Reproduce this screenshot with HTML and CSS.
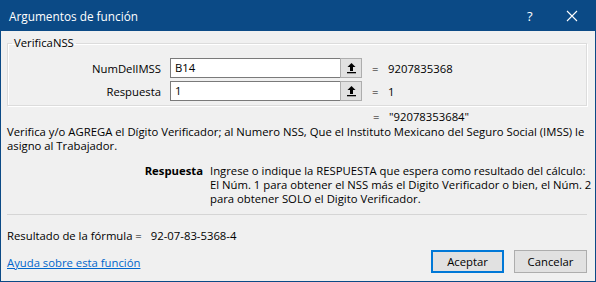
FILE: index.html
```html
<!DOCTYPE html>
<html lang="es">
<head>
    <meta charset="UTF-8">
    <meta name="viewport" content="width=device-width, initial-scale=1.0">
    <title>Argumentos de función</title>
    <link rel="stylesheet" href="styles.css">
</head>
<body>
    <div class="dialog">
        <header class="titlebar">
            <span class="title">Argumentos de función</span>
            <span class="help">?</span>
            <span class="close">
                <svg width="12" height="12" viewBox="0 0 12 12">
                    <path d="M1 1 L11 11 M11 1 L1 11" stroke="#fff" stroke-width="1.1" fill="none"/>
                </svg>
            </span>
        </header>

        <div class="content">
            <fieldset class="args">
                <legend>VerificaNSS</legend>
                <div class="arg-row">
                    <label class="arg-name">NumDelIMSS</label>
                    <div class="arg-input">B14</div>
                    <button class="ref-btn">
                        <svg width="11" height="12" viewBox="0 0 11 12">
                            <path d="M5.5 1 L1.5 5 H4 V9 H7 V5 H9.5 Z" fill="#000"/>
                            <rect x="1" y="10" width="9" height="1.3" fill="#000"/>
                        </svg>
                    </button>
                    <span class="eq">=</span>
                    <span class="arg-value">9207835368</span>
                </div>
                <div class="arg-row">
                    <label class="arg-name">Respuesta</label>
                    <div class="arg-input">1</div>
                    <button class="ref-btn">
                        <svg width="11" height="12" viewBox="0 0 11 12">
                            <path d="M5.5 1 L1.5 5 H4 V9 H7 V5 H9.5 Z" fill="#000"/>
                            <rect x="1" y="10" width="9" height="1.3" fill="#000"/>
                        </svg>
                    </button>
                    <span class="eq">=</span>
                    <span class="arg-value">1</span>
                </div>
            </fieldset>

            <div class="fn-result">
                <span class="eq">=</span>
                <span class="arg-value">"92078353684"</span>
            </div>

            <p class="fn-desc">Verifica y/o AGREGA el Dígito Verificador; al Numero NSS, Que el Instituto Mexicano del Seguro Social (IMSS) le<br>asigno al Trabajador.</p>

            <div class="param-desc">
                <span class="param-name">Respuesta</span>
                <p class="param-text">Ingrese o indique la RESPUESTA que espera como resultado del cálculo:<br>El Núm. 1 para obtener el NSS más el Digito Verificador o bien, el Núm. 2<br>para obtener SOLO el Digito Verificador.</p>
            </div>

            <div class="separator"></div>

            <div class="formula">
                <span>Resultado de la fórmula =</span>
                <span class="formula-value">92-07-83-5368-4</span>
            </div>

            <div class="footer">
                <a href="#" class="help-link">Ayuda sobre esta función</a>
                <div class="buttons">
                    <button class="btn btn-default">Aceptar</button>
                    <button class="btn">Cancelar</button>
                </div>
            </div>
        </div>
    </div>
</body>
</html>
```

FILE: styles.css
```css
body {
  margin: 0;
  font-family: "Open Sans", "Noto Sans", sans-serif;
  font-size: 11.3px;
  color: #000;
}

.dialog {
  width: 596px;
  height: 282px;
  box-sizing: border-box;
  border: 1px solid #0b4a86;
  border-top: none;
  background: #f0f0f0;
  display: flex;
  flex-direction: column;
}

.titlebar {
  height: 31px;
  flex: none;
  background: #0b4a86;
  color: #fff;
  display: flex;
  align-items: center;
  padding-left: 8px;
}

.title {
  flex: 1;
  font-size: 11.8px;
}

.help {
  width: 12px;
  margin-right: 27px;
  font-size: 13px;
}

.close {
  width: 12px;
  height: 12px;
  margin-right: 17px;
  display: flex;
}

.content {
  flex: 1;
  padding: 0 8px 0 6px;
  display: flex;
  flex-direction: column;
}

/* arguments group */
.args {
  margin: 4px 0 0;
  padding: 7px 0 4px;
  border: 1px solid #dcdcdc;
  box-shadow: inset 1px 1px 0 #fff, 1px 1px 0 #fff;
}

.args legend {
  margin-left: 4px;
  padding: 0 2px;
  line-height: 16px;
}

.arg-row {
  display: flex;
  align-items: center;
  height: 20px;
}

.arg-row + .arg-row {
  margin-top: 3px;
}

.arg-name {
  width: 153px;
  margin-right: 9px;
  text-align: right;
}

.arg-input {
  width: 170px;
  height: 20px;
  box-sizing: border-box;
  border: 1px solid #7a7a7a;
  border-right: none;
  background: #fff;
  padding-left: 4px;
  line-height: 18px;
}

.ref-btn {
  width: 22px;
  height: 20px;
  margin: 0;
  padding: 0;
  border: 1px solid #adadad;
  background: #e1e1e1;
  display: flex;
  align-items: center;
  justify-content: center;
}

.eq {
  margin-left: 10px;
  width: 16px;
}

.fn-result {
  margin-top: 4px;
  padding-left: 366px;
  display: flex;
  line-height: 14px;
}

.fn-result .eq {
  margin-left: 0;
}

.fn-desc {
  margin: 1px 0 0;
  line-height: 14px;
  white-space: nowrap;
}

.param-desc {
  margin-top: 11px;
  display: flex;
  line-height: 14px;
}

.param-name {
  flex: none;
  width: 196px;
  margin-right: 7px;
  text-align: right;
  font-weight: bold;
}

.param-text {
  margin: 0;
  white-space: nowrap;
}

.separator {
  margin-top: 8px;
  border-top: 1px solid #d5d5d5;
}

.formula {
  margin-top: 14px;
  line-height: 14px;
  display: flex;
  gap: 9px;
}

.footer {
  margin-top: 7px;
  display: flex;
  align-items: center;
  justify-content: space-between;
}

.help-link {
  color: #0066cc;
  margin-top: 2px;
}

.buttons {
  display: flex;
  gap: 10px;
}

.btn {
  width: 73px;
  height: 23px;
  font-family: inherit;
  font-size: 11.3px;
  padding: 0;
  border: 1px solid #adadad;
  background: #e1e1e1;
  color: #000;
}

.btn-default {
  border: 2px solid #0078d7;
}
```
